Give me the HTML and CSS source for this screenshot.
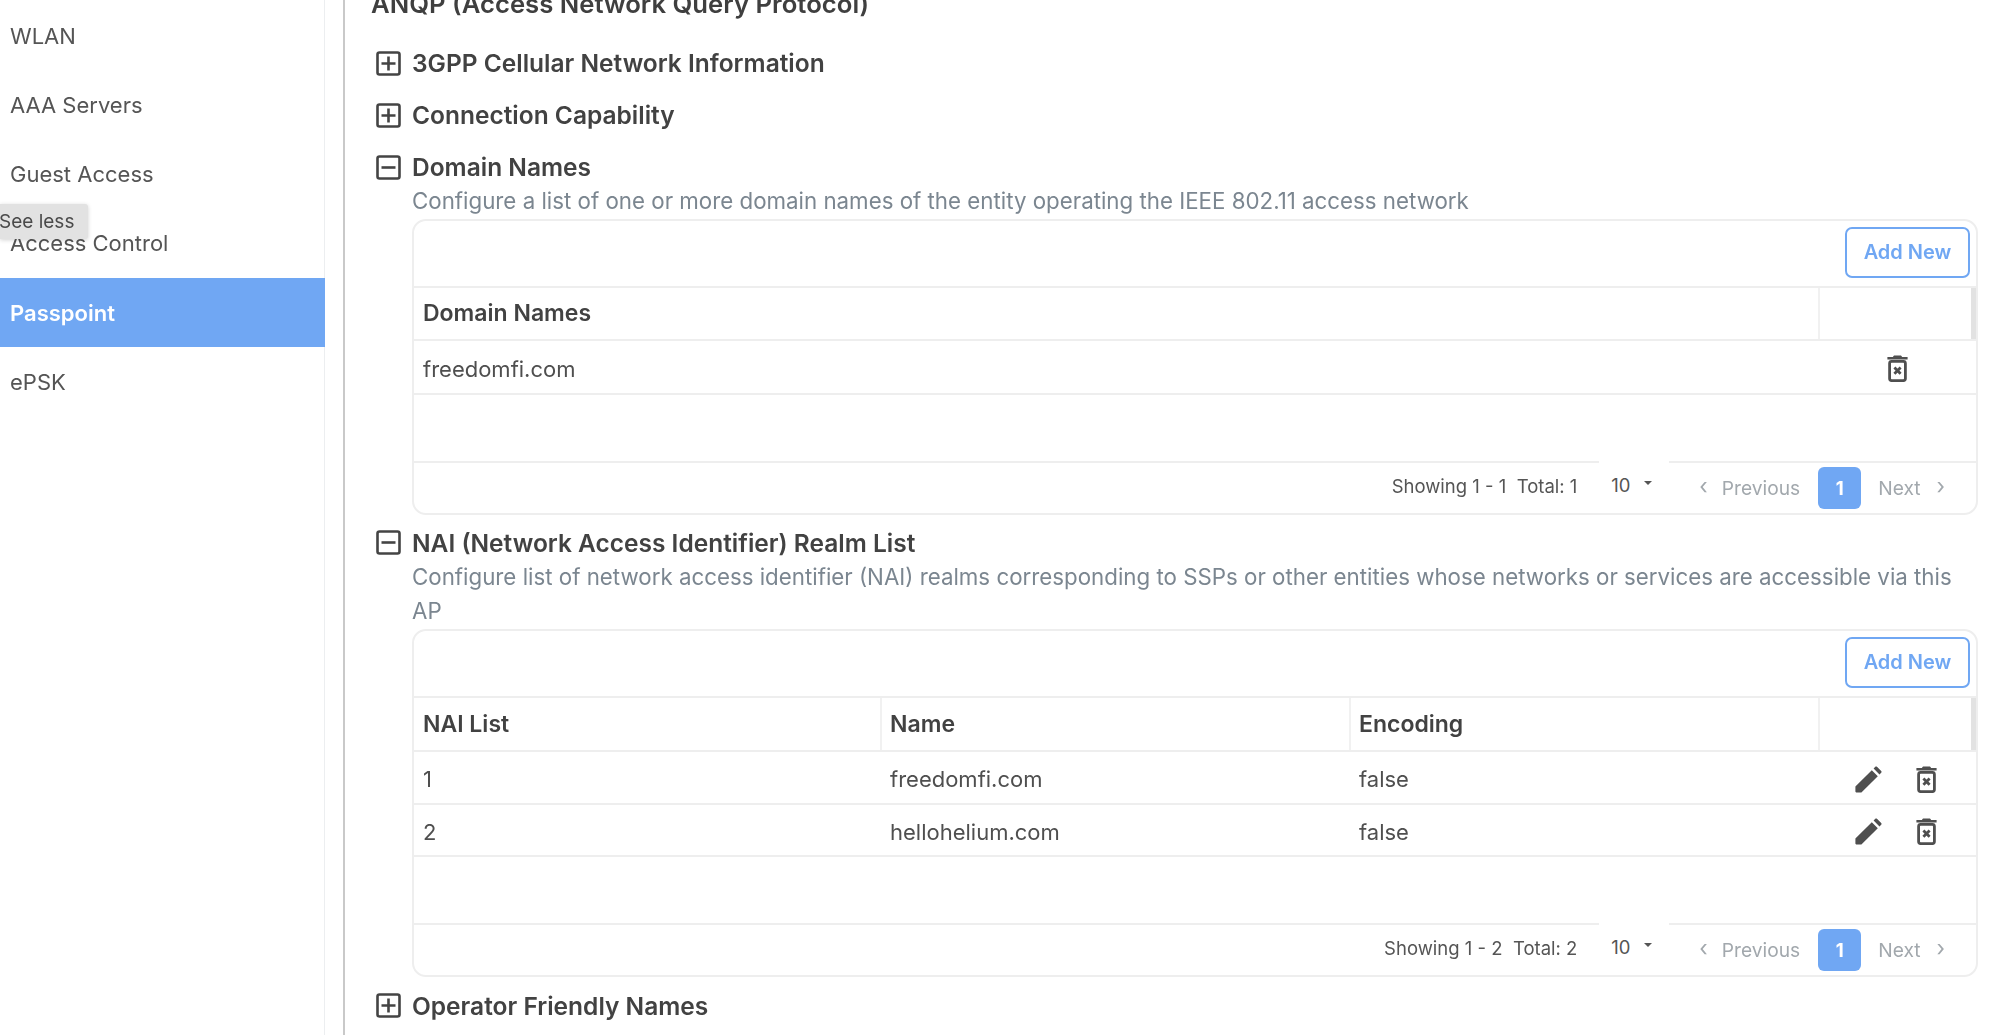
FILE: index.html
```html
<!DOCTYPE html>
<html lang="en">
<head>
<meta charset="utf-8">
<title>Passpoint</title>
<link rel="stylesheet" href="styles.css">
</head>
<body>
<svg class="defs" width="0" height="0" aria-hidden="true">
  <symbol id="plus" viewBox="0 0 25 25"><rect x="1.5" y="1.5" width="22" height="22" rx="2" fill="none" stroke="currentColor" stroke-width="2.6"/><path d="M12.5 5.5v14M5.5 12.5h14" stroke="currentColor" stroke-width="2.6" fill="none"/></symbol>
  <symbol id="minus" viewBox="0 0 25 25"><rect x="1.5" y="1.5" width="22" height="22" rx="2" fill="none" stroke="currentColor" stroke-width="2.6"/><path d="M5.5 12.5h14" stroke="currentColor" stroke-width="2.6" fill="none"/></symbol>
  <symbol id="trash" viewBox="0 0 21 27"><path d="M7 0.4h7l1.2 1.6H20.6v2.4H.4V2H5.800z" fill="currentColor"/><rect x="2.600" y="6.400" width="15.800" height="19.200" rx="2" fill="none" stroke="currentColor" stroke-width="2.800"/><path d="M7.400 12.600l6.200 6.200M13.600 12.600l-6.200 6.200" stroke="currentColor" stroke-width="2.800" fill="none"/></symbol>
  <symbol id="pencil" viewBox="0 0 27 27"><path d="M.4 20.500 16.800 4.200l6 6L6.400 26.400H1.200c-.5 0-.8-.3-.8-.8z" fill="currentColor"/><path d="M18.600 2.500l1.700-1.700c.5-.5 1.200-.5 1.700 0l4.200 4.200c.5.500.5 1.200 0 1.700l-1.700 1.700z" fill="currentColor"/></symbol>
</svg>
<div class="app">
  <nav class="sidebar">
    <a class="nav-item">WLAN</a>
    <a class="nav-item">AAA Servers</a>
    <a class="nav-item">Guest Access</a>
    <a class="nav-item">Access Control</a>
    <a class="nav-item active">Passpoint</a>
    <a class="nav-item">ePSK</a>
    <div class="tooltip">See less</div>
  </nav>
  <main class="main">
    <h2 class="page-title">ANQP (Access Network Query Protocol)</h2>

    <section class="section collapsed">
      <div class="sec-head"><svg class="toggle"><use href="#plus"/></svg><span>3GPP Cellular Network Information</span></div>
    </section>
    <section class="section collapsed">
      <div class="sec-head"><svg class="toggle"><use href="#plus"/></svg><span>Connection Capability</span></div>
    </section>

    <section class="section">
      <div class="sec-head"><svg class="toggle"><use href="#minus"/></svg><span>Domain Names</span></div>
      <p class="desc">Configure a list of one or more domain names of the entity operating the IEEE 802.11 access network</p>
      <div class="tbl">
        <div class="toolbar"><button class="add">Add New</button></div>
        <div class="row head cols-1">
          <div class="cell">Domain Names</div>
          <div class="cell"></div>
        </div>
        <div class="row body cols-1 h54">
          <div class="cell">freedomfi.com</div>
          <div class="cell actions center"><svg class="i-trash"><use href="#trash"/></svg></div>
        </div>
        <div class="empty"></div>
        <div class="footer">
          <span class="showing">Showing 1 - 1&nbsp; Total: 1</span>
          <span class="size">10<i class="caret"></i></span>
          <span class="pager off"><span class="chev">‹</span>Previous</span>
          <span class="page-no">1</span>
          <span class="pager off next">Next<span class="chev">›</span></span>
        </div>
      </div>
    </section>

    <section class="section">
      <div class="sec-head"><svg class="toggle"><use href="#minus"/></svg><span>NAI (Network Access Identifier) Realm List</span></div>
      <p class="desc">Configure list of network access identifier (NAI) realms corresponding to SSPs or other entities whose networks or services are accessible via this AP</p>
      <div class="tbl">
        <div class="toolbar"><button class="add">Add New</button></div>
        <div class="row head cols-3 h54">
          <div class="cell">NAI List</div>
          <div class="cell">Name</div>
          <div class="cell">Encoding</div>
          <div class="cell"></div>
        </div>
        <div class="row body cols-3">
          <div class="cell">1</div>
          <div class="cell">freedomfi.com</div>
          <div class="cell">false</div>
          <div class="cell actions"><svg class="i-pencil"><use href="#pencil"/></svg><svg class="i-trash"><use href="#trash"/></svg></div>
        </div>
        <div class="row body cols-3 h52">
          <div class="cell">2</div>
          <div class="cell">hellohelium.com</div>
          <div class="cell">false</div>
          <div class="cell actions"><svg class="i-pencil"><use href="#pencil"/></svg><svg class="i-trash"><use href="#trash"/></svg></div>
        </div>
        <div class="empty"></div>
        <div class="footer short">
          <span class="showing">Showing 1 - 2&nbsp; Total: 2</span>
          <span class="size">10<i class="caret"></i></span>
          <span class="pager off"><span class="chev">‹</span>Previous</span>
          <span class="page-no">1</span>
          <span class="pager off next">Next<span class="chev">›</span></span>
        </div>
      </div>
    </section>

    <section class="section collapsed after-table">
      <div class="sec-head"><svg class="toggle"><use href="#plus"/></svg><span>Operator Friendly Names</span></div>
    </section>
  </main>
</div>
</body>
</html>
```
FILE: styles.css
```css
* { box-sizing: border-box; }
html, body { margin: 0; height: 100%; overflow: hidden; background: #fff; }
body { font-family: Inter, Lato, sans-serif; color: #4a4a4a; font-size: 22px; }
.defs { position: absolute; }
.app { display: flex; height: 1035px; overflow: hidden; filter: blur(.45px); }

.sidebar { position: relative; width: 325px; flex: none; border-right: 1px solid #eceef0; }
.nav-item { display: flex; align-items: center; height: 69.25px; padding-left: 10px; color: #555; }
.nav-item:first-child { margin-top: 1px; }
.nav-item.active { background: #70a7f3; color: #fff; font-weight: 600; margin-right: -1px; }
.tooltip { position: absolute; left: 0; top: 204px; width: 88px; height: 35px; display: flex; align-items: center; background: #e2e2e2; border-radius: 0 3px 3px 0; box-shadow: 0 1px 4px rgba(0,0,0,.18); font-size: 19px; color: #4a4a4a; text-indent: -1px; }

.main { flex: 1; margin-left: 18px; border-left: 2px solid #c9c9c9; padding: 0 21px 0 26px; min-width: 0; }
.page-title { margin: -13px 0 25px; font-size: 25.7px; line-height: 34px; font-weight: 600; color: #3f3f3f; }
.section { margin-bottom: 11px; }
.section.collapsed { margin-bottom: 18px; }
.section.after-table { margin-top: 12px; }
.sec-head { display: flex; align-items: center; height: 34px; padding-left: 5px; font-size: 24.5px; font-weight: 600; color: #424242; }
.toggle { width: 25px; height: 25px; margin-right: 11px; flex: none; color: #444; }
.desc { margin: 0 0 0 41px; font-size: 22.3px; line-height: 34.5px; color: #7b8690; }

.tbl { margin-left: 41px; border: 2px solid #eeeeee; border-radius: 14px; overflow: hidden; }
.toolbar { height: 65px; display: flex; justify-content: flex-end; align-items: flex-start; padding: 6px 6px 0 0; }
.add { width: 125px; height: 51px; background: #fff; border: 2px solid #70a7f3; border-radius: 7px; color: #70a7f3; font: 600 20px Inter, sans-serif; padding: 0; }

.row { display: grid; border-top: 2px solid #eeeeee; height: 53px; }
.h54 { height: 54px; }
.h52 { height: 52px; }
.cols-1 { grid-template-columns: 1404px 1fr; }
.cols-3 { grid-template-columns: 466px 469px 469px 1fr; }
.cell { display: flex; align-items: center; padding-left: 9px; min-width: 0; }
.head .cell { font-size: 23px; font-weight: 600; color: #424242; }
.head .cell + .cell { border-left: 2px solid #f1f1f1; padding-left: 8px; }
.head .cell:last-child { border-right: 5px solid #e2e2e2; }
.body .cell { color: #4f4f4f; padding-top: 4px; }
.body .cell + .cell:not(.actions) { padding-left: 10px; }
.actions { gap: 34px; padding-left: 37px; color: #444; }
.actions.center { padding-left: 69px; }
.i-trash { width: 21px; height: 27px; flex: none; }
.i-pencil { width: 27px; height: 27px; flex: none; }

.empty { border-top: 2px solid #eeeeee; height: 68px; }
.footer { display: flex; align-items: center; justify-content: flex-end; height: 52px; border-top: 2px solid #eeeeee; font-size: 18.5px; color: #555; padding-right: 31px; }
.footer.short { height: 52px; }
.showing { margin-right: 22px; margin-top: -3px; }
.size { position: relative; align-self: stretch; width: 70px; margin-top: -2px; background: #fff; display: flex; align-items: center; padding-left: 12px; padding-bottom: 3px; margin-right: 30px; }
.caret { display: block; margin-left: 13px; margin-top: -4px; border: 4px solid transparent; border-top-color: #555; border-bottom: 0; }
.pager { display: inline-flex; align-items: center; color: #a2a8ad; font-size: 19.2px; }
.chev { font-size: 22px; margin-right: 14px; margin-top: -3px; }
.next .chev { margin: -3px 0 0 16px; }
.page-no { width: 43px; height: 42px; margin: 0 17px 0 18px; background: #70a7f3; border-radius: 6px; color: #fff; font-weight: 700; display: flex; align-items: center; justify-content: center; }
```
